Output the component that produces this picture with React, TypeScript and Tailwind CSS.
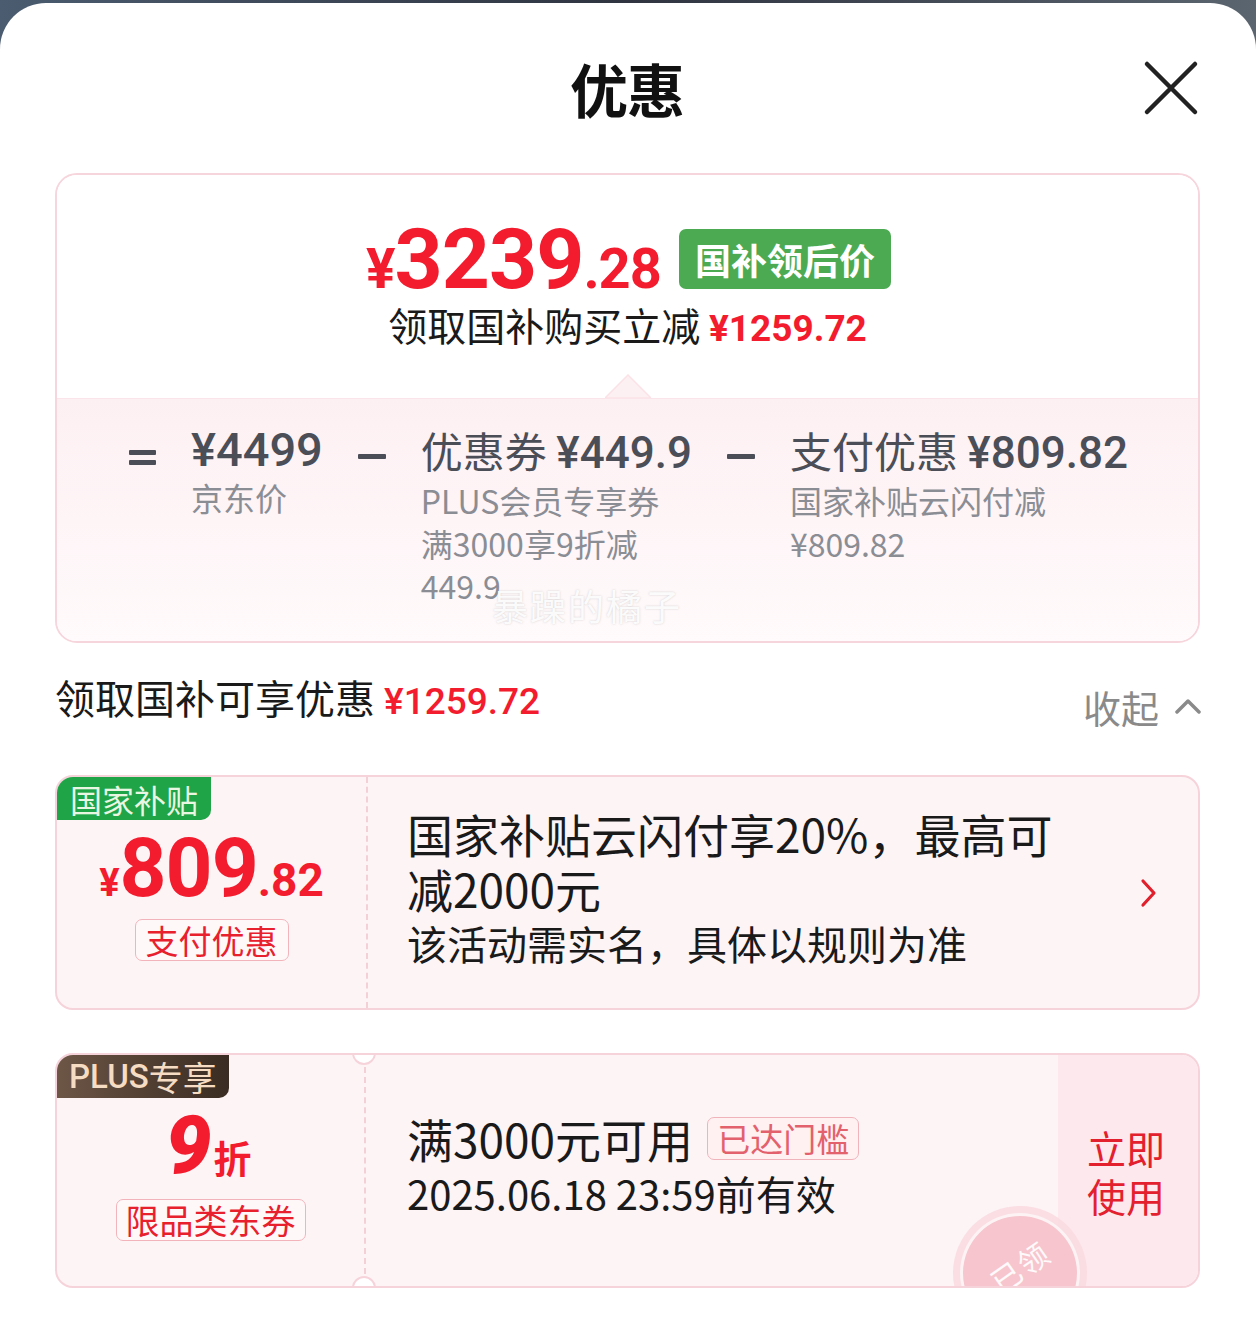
import React from "react";

const CJK = "font-['Noto_Sans_CJK_SC',sans-serif]";
const NUM = "font-['Roboto','Noto_Sans_CJK_SC',sans-serif]";

function CloseIcon() {
  return (
    <svg width="56" height="56" viewBox="0 0 56 56" fill="none">
      <path d="M4 4 L52 52 M52 4 L4 52" stroke="#222" strokeWidth="4.5" strokeLinecap="round" />
    </svg>
  );
}

function Minus() {
  return (
    <div className="h-[52px] flex items-center pt-[12px]">
      <div className="w-[28px] h-[5px] bg-[#4b4e57] rounded-[1px]" />
    </div>
  );
}

function Equals() {
  return (
    <div className="h-[52px] flex flex-col justify-center gap-[5px] pt-[14px]">
      <div className="w-[27px] h-[5px] bg-[#4b4e57] rounded-[1px]" />
      <div className="w-[27px] h-[5px] bg-[#4b4e57] rounded-[1px]" />
    </div>
  );
}

export default function App() {
  return (
    <div className={`w-[1256px] h-[1318px] overflow-hidden bg-gradient-to-r from-[#4b5c70] via-[#2f3440] to-[#5a6570] ${CJK}`}>
      <div className="mt-[3px] h-[1315px] bg-white rounded-t-[46px]">
        {/* header */}
        <div className="h-[170px] grid grid-cols-[1fr_auto_1fr] items-center pl-[55px] pr-[57px]">
          <div />
          <div className="text-[58px] font-bold leading-none text-[#111] tracking-[-1px]">优惠</div>
          <div className="justify-self-end flex items-center">
            <CloseIcon />
          </div>
        </div>

        {/* summary card */}
        <div className="mx-[55px] mr-[56px] border-2 border-[#f7d5dc] rounded-[22px] overflow-hidden relative">
          <div className="relative bg-white h-[223px] flex flex-col items-center pt-[45px]">
            <div className="flex items-center gap-[18px] pl-[2px]">
              <div className={`${NUM} text-[#f21c2e] font-bold leading-[80px] whitespace-nowrap tracking-[-1px]`}>
                <span className="text-[55px]">¥</span>
                <span className="text-[84px]">3239</span>
                <span className="text-[56px]">.28</span>
              </div>
              <div className="bg-[#4caa53] rounded-[7px] h-[60px] px-[16px] flex items-center text-white text-[36px] font-bold leading-none -mt-[26px]">
                国补领后价
              </div>
            </div>
            <div className="-mt-[21px] text-[39px] leading-[44px] text-[#1a1a1a] whitespace-nowrap">
              领取国补购买立减 <span className={`${NUM} text-[#f21c2e] font-bold text-[37px]`}>¥1259.72</span>
            </div>
            <svg className="absolute bottom-0 left-[calc(50%-23px)]" width="46" height="24" viewBox="0 0 46 24">
              <path d="M0 24 L23 1 L46 24 Z" fill="#fdf0f3" stroke="#fbe2e7" strokeWidth="1.5" />
            </svg>
          </div>
          <div className="relative h-[243px] bg-gradient-to-b from-[#fdf0f3] to-[#fffafb] border-t border-[#fbe5ea] flex justify-center gap-[35px] pt-[25px] pl-[2px]">
            <Equals />
            <div className="flex flex-col">
              <div className={`${NUM} text-[47px] leading-[52px] font-medium text-[#4b4e57]`}>¥4499</div>
              <div className="text-[32px] leading-[43px] text-[#8b8d94]">京东价</div>
            </div>
            <Minus />
            <div className="flex flex-col">
              <div className="text-[42px] leading-[52px] text-[#4b4e57] whitespace-nowrap">
                优惠券 <span className={`${NUM} font-medium text-[44px]`}>¥449.9</span>
              </div>
              <div className="text-[32px] leading-[43px] text-[#8b8d94]">PLUS会员专享券</div>
              <div className="text-[32px] leading-[43px] text-[#8b8d94]">满3000享9折减</div>
              <div className="text-[32px] leading-[40px] text-[#8b8d94]">449.9</div>
            </div>
            <Minus />
            <div className="flex flex-col">
              <div className="text-[42px] leading-[52px] text-[#4b4e57] whitespace-nowrap">
                支付优惠 <span className={`${NUM} font-medium text-[44px]`}>¥809.82</span>
              </div>
              <div className="text-[32px] leading-[43px] text-[#8b8d94]">国家补贴云闪付减</div>
              <div className="text-[32px] leading-[43px] text-[#8b8d94]">¥809.82</div>
            </div>
            <div className="absolute left-[435px] top-[188px] text-[36px] leading-none text-white/90 [text-shadow:0_0_2px_rgba(120,120,120,0.35)] tracking-[2px]">
              暴躁的橘子
            </div>
          </div>
        </div>

        {/* section heading */}
        <div className="mt-[29px] px-[55px] flex justify-between items-start h-[50px]">
          <div className="text-[40px] leading-[50px] text-[#1a1a1a] whitespace-nowrap">
            领取国补可享优惠 <span className={`${NUM} text-[#f21c2e] font-medium text-[37px]`}>¥1259.72</span>
          </div>
          <div className="mt-[9px] h-[50px] flex items-center gap-[16px] text-[38px] text-[#8a8a8a]">
            <span>收起</span>
            <svg width="26" height="16" viewBox="0 0 26 16" fill="none">
              <path d="M2 14 L13 3 L24 14" stroke="#8a8a8a" strokeWidth="3.5" strokeLinecap="round" strokeLinejoin="round" />
            </svg>
          </div>
        </div>

        {/* card 2 */}
        <div className="mt-[53px] mx-[55px] mr-[56px] h-[235px] border-2 border-[#f6d3da] rounded-[18px] bg-[#fdf4f6] flex relative overflow-hidden">
          <div className="absolute left-0 top-0 h-[43px] px-[13px] bg-[#1fa447] rounded-br-[10px] flex items-center text-[32px] leading-none text-[#e9f6e2]">
            国家补贴
          </div>
          <div className="w-[309px] flex flex-col items-center justify-center pt-[4px]">
            <div className={`${NUM} text-[#f21c2e] font-bold leading-[80px] whitespace-nowrap`}>
              <span className="text-[38px]">¥</span>
              <span className="text-[82px] tracking-[-1px]">809</span>
              <span className="text-[46px]">.82</span>
            </div>
            <div className="-mt-[12px] h-[42px] px-[10px] border-[1.5px] border-[#f2b3bb] rounded-[7px] bg-white/40 flex items-center text-[33px] leading-none text-[#e8202e]">
              支付优惠
            </div>
          </div>
          <div className="border-l-2 border-dashed border-[#f3d0d6]" />
          <div className="flex-1 pl-[39px] flex flex-col justify-center pb-[8px]">
            <div className="text-[46px] leading-[55px] text-[#1a1a1a] whitespace-nowrap">国家补贴云闪付享20%，最高可</div>
            <div className="text-[46px] leading-[55px] text-[#1a1a1a]">减2000元</div>
            <div className="text-[40px] leading-[55px] text-[#1a1a1a] whitespace-nowrap">该活动需实名，具体以规则为准</div>
          </div>
          <div className="w-[60px] flex items-center justify-start pl-[2px]">
            <svg width="18" height="30" viewBox="0 0 18 30" fill="none">
              <path d="M3 3 L14 15 L3 27" stroke="#e0202c" strokeWidth="3.2" strokeLinecap="round" strokeLinejoin="round" />
            </svg>
          </div>
        </div>

        {/* card 3 */}
        <div className="mt-[43px] mx-[55px] mr-[56px] h-[235px] border-2 border-[#f6d3da] rounded-[18px] bg-[#fdf4f6] flex relative overflow-hidden">
          <div className="absolute left-0 top-0 h-[43px] px-[12px] bg-gradient-to-r from-[#6d5646] to-[#3a2c22] rounded-br-[10px] flex items-center text-[34px] leading-none text-[#f5dcc2] z-10">
            <span className={`${NUM} font-medium text-[33px]`}>PLUS</span>专享
          </div>
          <div className="absolute left-[295px] top-[-14px] w-[24px] h-[24px] rounded-full bg-white border-2 border-[#f6d3da] z-10" />
          <div className="absolute left-[295px] bottom-[-14px] w-[24px] h-[24px] rounded-full bg-white border-2 border-[#f6d3da] z-10" />
          <div className="w-[307px] flex flex-col items-center justify-center pt-[10px]">
            <div className="flex items-baseline text-[#f21c2e] leading-[70px] pr-[4px]">
              <span className={`${NUM} font-black text-[82px] italic`}>9</span>
              <span className="font-bold text-[38px] ml-[2px]">折</span>
            </div>
            <div className="mt-[7px] h-[42px] px-[9px] border-[1.5px] border-[#f2b3bb] rounded-[7px] bg-white/40 flex items-center text-[34px] leading-none text-[#e8202e]">
              限品类东券
            </div>
          </div>
          <div className="my-[12px] border-l-2 border-dashed border-[#f3d0d6]" />
          <div className="flex-1 pl-[41px] flex flex-col justify-center pb-[10px]">
            <div className="flex items-center gap-[14px] h-[55px]">
              <span className="text-[46px] leading-[55px] text-[#1a1a1a] whitespace-nowrap">满3000元可用</span>
              <span className="h-[43px] px-[9px] border-[1.5px] border-[#f0b3bb] rounded-[7px] bg-[#fff0f2] flex items-center text-[33px] leading-none text-[#e2616c]">
                已达门槛
              </span>
            </div>
            <div className="text-[40px] leading-[55px] text-[#1a1a1a] whitespace-nowrap">2025.06.18 23:59前有效</div>
          </div>
          <div className="w-[140px] bg-[#fde8ed] flex flex-col items-center justify-center text-[39px] leading-[48px] text-[#e3202e] pr-[4px]">
            <span>立即</span>
            <span>使用</span>
          </div>
          <div className="absolute left-[896px] top-[151px] w-[134px] h-[134px] rounded-full bg-[#f9dce1]/90 p-[7px]">
            <div className="w-full h-full rounded-full border-[3px] border-white/80 bg-[#f6c5cd] flex items-start justify-center pt-[22px]">
              <span className="text-[30px] text-white/90 -rotate-[35deg] mt-[6px] tracking-[2px]">已领</span>
            </div>
          </div>
        </div>
      </div>
    </div>
  );
}
